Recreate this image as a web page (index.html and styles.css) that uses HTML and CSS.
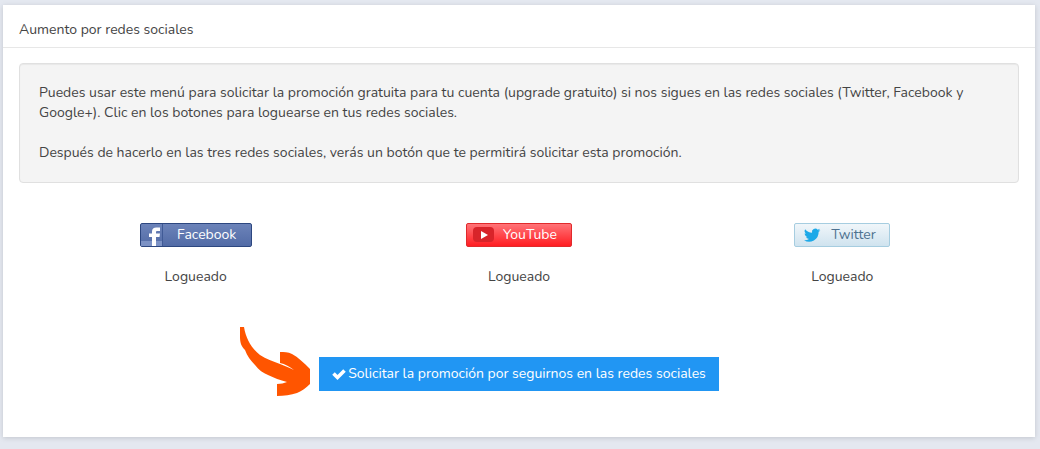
FILE: index.html
```html
<!DOCTYPE html>
<html lang="es">
<head>
<meta charset="utf-8">
<meta name="viewport" content="width=device-width, initial-scale=1">
<title>Aumento por redes sociales</title>
<link rel="stylesheet" href="styles.css">
</head>
<body>
<main class="card">
  <h1 class="card-title">Aumento por redes sociales</h1>
  <div class="card-body">
    <section class="well">
      <p>Puedes usar este menú para solicitar la promoción gratuita para tu cuenta (upgrade gratuito) si nos sigues en las redes sociales (Twitter, Facebook y Google+). Clic en los botones para loguearse en tus redes sociales.</p>
      <p>Después de hacerlo en las tres redes sociales, verás un botón que te permitirá solicitar esta promoción.</p>
    </section>
    <section class="networks">
      <div class="network">
        <button type="button" class="social facebook">
          <svg class="social-icon" viewBox="0 0 22 22" aria-hidden="true"><path fill="#7c92c5" d="M0 17h22v5H0z"/><path fill="#fff" d="M11 22v-9H8V9.500h3V7.500C11 4.800 12.500 3.500 15.500 3.500H19V7h-2.500C15.300 7 15 7.500 15 8.400v1.100h4l-.5 3.500H15v9z"/><path fill="#405a96" d="M21 0h1v22h-1z"/></svg>
          <span>Facebook</span>
        </button>
        <span>Logueado</span>
      </div>
      <div class="network">
        <button type="button" class="social youtube">
          <svg class="social-icon" viewBox="0 0 22 22" aria-hidden="true"><rect x="6" y="3" width="21" height="15" rx="4" fill="#d8242a"/><path fill="#fff" d="M14 7v8l7-4z"/></svg>
          <span>YouTube</span>
        </button>
        <span>Logueado</span>
      </div>
      <div class="network">
        <button type="button" class="social twitter">
          <svg class="social-icon" viewBox="0 0 22 22" aria-hidden="true"><path fill="#1da9e8" transform="translate(9 3) scale(.68)" d="M24 4.600a10 10 0 0 1-2.800.8 5 5 0 0 0 2.100-2.700 10 10 0 0 1-3.100 1.200 4.900 4.900 0 0 0-8.400 4.500A14 14 0 0 1 1.700 3.200a4.900 4.900 0 0 0 1.500 6.500 5 5 0 0 1-2.200-.6 4.900 4.900 0 0 0 3.900 4.900 5 5 0 0 1-2.200.1 4.900 4.900 0 0 0 4.600 3.400A10 10 0 0 1 0 19.500 14 14 0 0 0 21.500 7.100 10 10 0 0 0 24 4.600z"/></svg>
          <span>Twitter</span>
        </button>
        <span>Logueado</span>
      </div>
    </section>
    <section class="request">
      <svg class="arrow" viewBox="0 0 72 72" aria-hidden="true"><path fill="#ff5500" d="M1 1h4C7 13 13 23 21 29c6 4 13 6 20 9 5 2 10 4 14 6-4-3-9-6-14-7V26c4 0 8 0 12 2 6 3 12 9 18 15v15c-4 4-8 7-13 9-6 2-13 3-20 3V58c4 0 7-1 10-2-7-2-13-4-19-7-5-2-9-5-13-10-4-4-8-9-10-15C2 20 1 16 1 11z"/></svg>
      <button type="button" class="submit">
        <svg class="check" viewBox="0 0 14 14" aria-hidden="true"><path d="M1.500 6.500L5.500 10.500l7-7" fill="none" stroke="#fff" stroke-width="3.600"/></svg>
        <span>Solicitar la promoción por seguirnos en las redes sociales</span>
      </button>
    </section>
  </div>
</main>
</body>
</html>
```
FILE: styles.css
```css
* { box-sizing: border-box; }

body {
  margin: 0;
  padding: 5px 5px 12px 3px;
  background: #e4e8f0;
  color: #444;
  font: 14px/20px Nunito, "Open Sans", sans-serif;
}

button {
  font: inherit;
  cursor: pointer;
}

.card {
  background: #fff;
  box-shadow: 0 1px 5px rgba(0, 0, 0, 0.15);
}

.card-title {
  margin: 0;
  padding: 15px 16px 7px;
  border-bottom: 1px solid #e7e7e7;
  font-size: 14px;
  font-weight: 400;
}

.card-body { padding: 15px 16px 39px; }

.well {
  padding: 19px;
  border: 1px solid #e0e0e0;
  border-radius: 4px;
  background: #f4f4f4;
  box-shadow: inset 0 1px 1px rgba(0, 0, 0, 0.05);
}

.well p { margin: 0; }
.well p + p { margin-top: 20px; }

.networks {
  display: grid;
  grid-template-columns: repeat(3, 1fr);
  padding: 40px 15px 39px;
}

.network {
  display: flex;
  flex-direction: column;
  align-items: center;
  gap: 20px;
}

.social {
  display: flex;
  align-items: center;
  height: 24px;
  padding: 0;
  border: 1px solid;
  border-radius: 2px;
}

.social span {
  flex: 1;
  padding-left: 14px;
  text-align: center;
}

.social-icon {
  width: 22px;
  height: 22px;
  overflow: visible;
}

.facebook {
  width: 112px;
  padding-right: 14px;
  border-color: #2d4780;
  background: linear-gradient(#6c83b9, #526ba6);
  color: #fff;
}

.youtube {
  width: 106px;
  padding-right: 14px;
  border-color: #e02a2c;
  background: linear-gradient(#ff7377, #ff1d22);
  color: #fff;
}

.twitter {
  width: 96px;
  padding-right: 14px;
  border-color: #a6cde0;
  background: linear-gradient(#f0f6fa, #cfe3ef);
  color: #4f7290;
}

.request {
  display: grid;
  grid-template-columns: 1fr auto 1fr;
  align-items: center;
  column-gap: 8px;
}

.arrow {
  width: 72px;
  height: 72px;
  justify-self: end;
}

.submit {
  display: flex;
  align-items: center;
  gap: 2px;
  margin-top: 24px;
  padding: 7px 13px;
  border: 0;
  background: #2196f3;
  color: #fff;
}

.check {
  width: 14px;
  height: 14px;
}
```
